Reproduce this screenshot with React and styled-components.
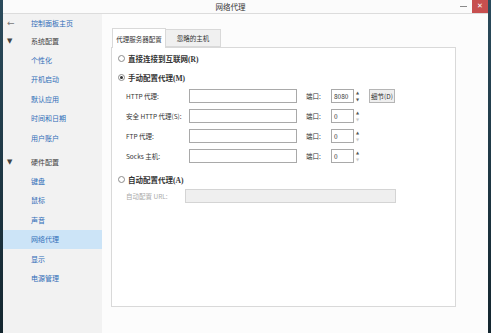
import React from "react";
import styled, { createGlobalStyle } from "styled-components";

const GlobalStyle = createGlobalStyle`
  html, body {
    margin: 0;
    padding: 0;
    background: #1d3442;
  }
  body {
    font-family: "Noto Sans CJK SC", "Noto Sans", sans-serif;
    white-space: nowrap;
  }
`;

const Desktop = styled.div`
  width: 491px;
  height: 333px;
  padding: 0 3px;
  box-sizing: border-box;
  background: linear-gradient(#2b4b5c, #14262f);
  overflow: hidden;
`;

const Window = styled.div`
  width: 100%;
  height: 100%;
  display: flex;
  flex-direction: column;
  background: #fcfcfc;
`;

const TitleBar = styled.div`
  height: 14px;
  flex-shrink: 0;
  display: flex;
  align-items: center;
  border-bottom: 1px solid #dcdcdc;
  background: #fbfbfb;
  box-sizing: border-box;
`;

const Title = styled.div`
  flex: 1;
  text-align: center;
  font-size: 7.5px;
  color: #333;
  padding-left: 2px;
  line-height: 13px;
`;

const MinButton = styled.div`
  width: 15px;
  height: 13px;
  display: flex;
  align-items: center;
  justify-content: center;
  &::after {
    content: "";
    width: 7px;
    height: 1px;
    background: #8a8a8a;
  }
`;

const CloseButton = styled.div`
  width: 16px;
  height: 13px;
  margin-left: 1px;
  background: #c74f4f;
  color: #fff;
  font-size: 7px;
  font-weight: 700;
  font-family: "DejaVu Sans", sans-serif;
  display: flex;
  align-items: center;
  justify-content: center;
  line-height: 1;
`;

const Body = styled.div`
  flex: 1;
  display: flex;
  min-height: 0;
`;

const Sidebar = styled.div`
  width: 99px;
  flex-shrink: 0;
  background: #f2f2f2;
  display: flex;
  flex-direction: column;
`;

const BackRow = styled.div`
  height: 18px;
  display: flex;
  align-items: center;
  font-size: 7px;
  color: #2f6db8;
`;

const Glyph = styled.span`
  width: 28px;
  padding-left: 4px;
  box-sizing: border-box;
  font-family: "DejaVu Sans", sans-serif;
  font-size: ${(p) => p.$size || 7}px;
  color: ${(p) => (p.$light ? "#777" : "#444")};
`;

const GroupHeader = styled.div`
  height: 18px;
  display: flex;
  align-items: center;
  font-size: 7px;
  color: #444;
  margin-top: ${(p) => p.$gap || 0}px;
`;

const NavItem = styled.div`
  height: 19.5px;
  display: flex;
  align-items: center;
  padding-left: 28px;
  font-size: 7px;
  color: #2f6db8;
  background: ${(p) => (p.$active ? "#cce4f7" : "transparent")};
`;

const Main = styled.div`
  flex: 1;
  padding: 14px 0 0 9px;
  display: flex;
  flex-direction: column;
`;

const Tabs = styled.div`
  display: flex;
  align-items: flex-end;
  margin-left: 1px;
  height: 19px;
`;

const Tab = styled.div`
  width: ${(p) => p.$w || 54}px;
  height: ${(p) => (p.$active ? 20 : 18)}px;
  box-sizing: border-box;
  border: 1px solid #d9d9d9;
  border-bottom: ${(p) => (p.$active ? "none" : "1px solid #d9d9d9")};
  border-left: ${(p) => (p.$first ? "1px solid #d9d9d9" : "none")};
  background: ${(p) => (p.$active ? "#fff" : "#f0f0f0")};
  font-size: 6.5px;
  color: #333;
  display: flex;
  align-items: center;
  justify-content: center;
  position: relative;
  z-index: 1;
  margin-bottom: ${(p) => (p.$active ? -1 : 0)}px;
`;

const Panel = styled.div`
  width: 345px;
  height: 260px;
  box-sizing: border-box;
  border: 1px solid #d9d9d9;
  background: #fff;
  padding: 0 0 0 6px;
  display: flex;
  flex-direction: column;
`;

const RadioRow = styled.label`
  height: ${(p) => p.$h || 20}px;
  margin-top: ${(p) => p.$mt || 0}px;
  display: flex;
  align-items: center;
  gap: 3px;
  font-family: "Liberation Serif", "Noto Sans CJK SC", serif;
  font-weight: 700;
  font-size: 7.5px;
  color: #333;
`;

const Radio = styled.span`
  width: 5px;
  height: 5px;
  border-radius: 50%;
  border: 1px solid #8c8c8c;
  background: #fff;
  display: flex;
  align-items: center;
  justify-content: center;
  &::after {
    content: "";
    width: 3px;
    height: 3px;
    border-radius: 50%;
    background: ${(p) => (p.$checked ? "#333" : "transparent")};
  }
`;

const FieldRow = styled.div`
  height: ${(p) => p.$h || 20}px;
  display: flex;
  align-items: center;
  padding-left: 8px;
  font-size: 6.5px;
  color: ${(p) => (p.$disabled ? "#aaa" : "#333")};
`;

const Label = styled.span`
  width: ${(p) => p.$w || 63}px;
  flex-shrink: 0;
`;

const TextBox = styled.div`
  width: ${(p) => p.$w || 108}px;
  height: 14px;
  box-sizing: border-box;
  border: 1px solid ${(p) => (p.$disabled ? "#d4d4d4" : "#a9a9a9")};
  background: ${(p) => (p.$disabled ? "#efefef" : "#fff")};
`;

const PortLabel = styled.span`
  margin-left: 9px;
  width: 25px;
`;

const Spin = styled.div`
  display: flex;
  height: 14px;
`;

const SpinValue = styled.div`
  width: 23px;
  height: 14px;
  box-sizing: border-box;
  border: 1px solid #a9a9a9;
  font-size: 6.5px;
  padding-left: 2px;
  display: flex;
  align-items: center;
`;

const Arrows = styled.div`
  width: 7px;
  display: flex;
  flex-direction: column;
  align-items: center;
  justify-content: space-between;
  font-family: "DejaVu Sans", sans-serif;
  font-size: 4px;
  line-height: 7px;
  color: #555;
  span:last-child {
    color: ${(p) => (p.$downOff ? "#c8c8c8" : "#555")};
  }
`;

const DetailButton = styled.div`
  margin-left: 8px;
  width: 26px;
  height: 14px;
  box-sizing: border-box;
  border: 1px solid #b5b5b5;
  background: #efefef;
  font-size: 6.5px;
  display: flex;
  align-items: center;
  justify-content: center;
  color: #333;
`;

const systemItems = ["个性化", "开机启动", "默认应用", "时间和日期", "用户账户"];
const hardwareItems = ["键盘", "鼠标", "声音", "网络代理", "显示", "电源管理"];

const proxies = [
  { label: "HTTP 代理:", port: "8080", details: true },
  { label: "安全 HTTP 代理(S):", port: "0" },
  { label: "FTP 代理:", port: "0" },
  { label: "Socks 主机:", port: "0" },
];

export default function App() {
  return (
    <Desktop>
      <GlobalStyle />
      <Window>
        <TitleBar>
          <Title>网络代理</Title>
          <MinButton />
          <CloseButton>✕</CloseButton>
        </TitleBar>
        <Body>
          <Sidebar>
            <BackRow>
              <Glyph $size={9} $light>←</Glyph>
              控制面板主页
            </BackRow>
            <GroupHeader>
              <Glyph>▼</Glyph>
              系统配置
            </GroupHeader>
            {systemItems.map((item) => (
              <NavItem key={item}>{item}</NavItem>
            ))}
            <GroupHeader $gap={5.5}>
              <Glyph>▼</Glyph>
              硬件配置
            </GroupHeader>
            {hardwareItems.map((item) => (
              <NavItem key={item} $active={item === "网络代理"}>
                {item}
              </NavItem>
            ))}
          </Sidebar>
          <Main>
            <Tabs>
              <Tab $active $first>代理服务器配置</Tab>
              <Tab $w={55}>忽略的主机</Tab>
            </Tabs>
            <Panel>
              <RadioRow>
                <Radio />
                直接连接到互联网(R)
              </RadioRow>
              <RadioRow $h={18}>
                <Radio $checked />
                手动配置代理(M)
              </RadioRow>
              {proxies.map((p) => (
                <FieldRow key={p.label}>
                  <Label>{p.label}</Label>
                  <TextBox />
                  <PortLabel>端口:</PortLabel>
                  <Spin>
                    <SpinValue>{p.port}</SpinValue>
                    <Arrows $downOff={p.port === "0"}>
                      <span>▲</span>
                      <span>▼</span>
                    </Arrows>
                  </Spin>
                  {p.details && <DetailButton>细节(D)</DetailButton>}
                </FieldRow>
              ))}
              <RadioRow $mt={3}>
                <Radio />
                自动配置代理(A)
              </RadioRow>
              <FieldRow $disabled $h={14}>
                <Label $w={59}>自动配置 URL:</Label>
                <TextBox $disabled $w={211} />
              </FieldRow>
            </Panel>
          </Main>
        </Body>
      </Window>
    </Desktop>
  );
}
